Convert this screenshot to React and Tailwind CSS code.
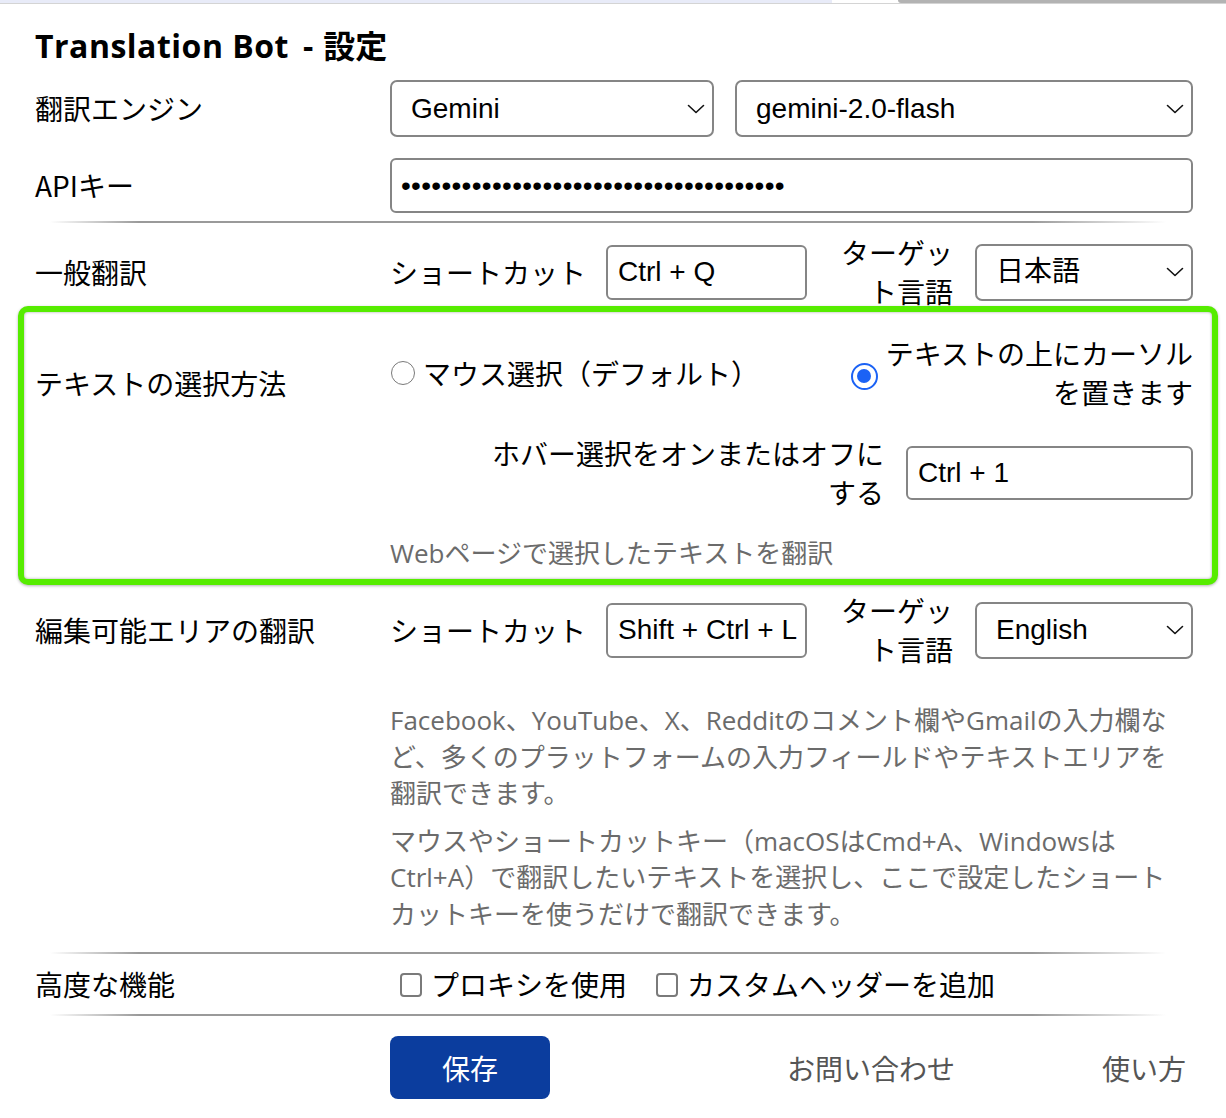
import { ChevronDown } from 'lucide-react'

const jp = "font-['Noto_Sans_CJK_JP',sans-serif]"
const arial = "font-['Liberation_Sans','Noto_Sans_CJK_JP',sans-serif]"
const note = "font-['Open_Sans','Noto_Sans_CJK_JP',sans-serif] text-[26px] text-[#6b6b6b]"

function Select({ value, className = '' }) {
  return (
    <div
      className={`flex items-center justify-between border-2 border-[#858585] rounded-[7px] pl-[19px] pr-[7px] bg-white ${className}`}
    >
      <span className={`${arial} text-[28px] leading-none text-black`}>{value}</span>
      <svg width="18" height="10" viewBox="0 0 18 10" fill="none">
        <path d="M1.5 1.5 L9 8.5 L16.5 1.5" stroke="#111" strokeWidth="1.6" strokeLinecap="round" strokeLinejoin="round" />
      </svg>
    </div>
  )
}

function TextBox({ value, className = '' }) {
  return (
    <div
      className={`flex items-center border-2 border-[#858585] rounded-[6px] pl-[10px] bg-white ${className}`}
    >
      <span className={`${arial} text-[28px] leading-none text-black whitespace-nowrap`}>{value}</span>
    </div>
  )
}

function Divider() {
  return (
    <div className="ml-[32px] w-[1116px] h-[2px] bg-[linear-gradient(to_right,rgba(150,150,150,0),#9a9a9a_8%,#9a9a9a_88%,rgba(150,150,150,0))]" />
  )
}

function ShortcutRow({ shortcut, lang }) {
  return (
    <div className={`flex items-center h-[78px] ${jp} text-[28px] leading-[39px] text-black`}>
      <span className="w-[196px] whitespace-nowrap">ショートカット</span>
      <TextBox value={shortcut} className="ml-[20px] w-[201px] h-[55px]" />
      <span className="ml-[26px] w-[120px] text-right">ターゲット言語</span>
      <Select value={lang} className="ml-[22px] flex-1 h-[57px]" />
    </div>
  )
}

export default function App() {
  const dots = '•'.repeat(38)

  return (
    <div className={`w-[1226px] min-h-[1118px] bg-white ${jp} text-black`}>
      {/* browser chrome sliver */}
      <div className="flex h-[4px] border-b border-[#d4d4d4]">
        <div className="w-[832px] bg-[#e8ebf8]" />
        <div className="ml-[66px] flex-1 bg-[#b3b3b3] rounded-bl-[6px]" />
      </div>

      <div className="pl-[18px] pr-[10px]">
        <h1 className="mt-[19px] pl-[17px] font-['Open_Sans','Noto_Sans_CJK_JP',sans-serif] font-bold text-[32px] leading-[45px]">
          <span className="tracking-[0.5px]">Translation Bot</span>
          <span className="ml-[14px] mr-[10px]">-</span>
          <span>設定</span>
        </h1>

        {/* engine */}
        <div className="mt-[12px] pl-[17px] pr-[23px] grid grid-cols-[355px_1fr] items-center">
          <span className="text-[28px] leading-[39px]">翻訳エンジン</span>
          <div className="flex gap-[21px]">
            <Select value="Gemini" className="w-[324px] h-[57px]" />
            <Select value="gemini-2.0-flash" className="flex-1 h-[57px]" />
          </div>
        </div>

        {/* api key */}
        <div className="mt-[21px] pl-[17px] pr-[23px] grid grid-cols-[355px_1fr] items-center">
          <span className="text-[28px] leading-[39px]">APIキー</span>
          <div className="flex items-center h-[55px] border-2 border-[#858585] rounded-[6px] pl-[9px] overflow-hidden">
            <span className={`${arial} text-[28px] leading-none tracking-[0.3px]`}>{dots}</span>
          </div>
        </div>

        <div className="mt-[8px]">
          <Divider />
        </div>

        {/* general translation */}
        <div className="mt-[10px] pl-[17px] pr-[23px] grid grid-cols-[355px_1fr] items-center">
          <span className="text-[28px] leading-[39px]">一般翻訳</span>
          <ShortcutRow shortcut="Ctrl + Q" lang="日本語" />
        </div>

        {/* selection method (highlighted) */}
        <div className="relative mt-[-5px] mr-[-2px] border-[6px] border-[#56ec00] rounded-[10px] bg-white shadow-[inset_0_0_3px_rgba(0,0,0,0.35),0_1px_3px_rgba(0,0,0,0.3)] pl-[11px] pr-[19px] pt-[22px] pb-[8px] grid grid-cols-[355px_1fr]">
          <span className="mt-[30px] text-[28px] leading-[39px] self-start">テキストの選択方法</span>
          <div className="text-[28px] leading-[39px]">
            <div className="flex items-center justify-between h-[78px]">
              <label className="flex items-center gap-[8px]">
                <span className="ml-[1px] w-[24px] h-[24px] rounded-full border-[1.5px] border-[#7a7a7a]" />
                <span>マウス選択（デフォルト）</span>
              </label>
              <label className="flex items-center gap-[8px]">
                <span className="mt-[6px] w-[27px] h-[27px] rounded-full border-[2.5px] border-[#1b62f5] flex items-center justify-center">
                  <span className="w-[14px] h-[14px] rounded-full bg-[#1b62f5]" />
                </span>
                <span className="text-right whitespace-nowrap">
                  テキストの上にカーソル
                  <br />
                  を置きます
                </span>
              </label>
            </div>
            <div className="mt-[22px] flex items-center justify-end">
              <span className="w-[400px] text-right">ホバー選択をオンまたはオフにする</span>
              <TextBox value="Ctrl + 1" className="ml-[22px] w-[287px] h-[54px]" />
            </div>
            <p className={`mt-[23px] ${note} leading-[36px]`}>Webページで選択したテキストを翻訳</p>
          </div>
        </div>

        {/* editable area */}
        <div className="mt-[6px] pl-[17px] pr-[23px] grid grid-cols-[355px_1fr]">
          <span className="h-[78px] flex items-center text-[28px] leading-[39px]">編集可能エリアの翻訳</span>
          <div>
            <ShortcutRow shortcut="Shift + Ctrl + L" lang="English" />
            <p className={`mt-[33px] ${note} leading-[36.5px]`}>
              Facebook、YouTube、X、Redditのコメント欄やGmailの入力欄な
              <br />
              ど、多くのプラットフォームの入力フィールドやテキストエリアを
              <br />
              翻訳できます。
            </p>
            <p className={`mt-[11px] ${note} leading-[36.5px]`}>
              マウスやショートカットキー（macOSはCmd+A、Windowsは
              <br />
              Ctrl+A）で翻訳したいテキストを選択し、ここで設定したショート
              <br />
              カットキーを使うだけで翻訳できます。
            </p>
          </div>
        </div>

        <div className="mt-[20px]">
          <Divider />
        </div>

        {/* advanced */}
        <div className="mt-[11px] pl-[17px] pr-[23px] grid grid-cols-[355px_1fr] items-center">
          <span className="text-[28px] leading-[39px]">高度な機能</span>
          <div className="flex items-center text-[28px] leading-[39px]">
            <span className="ml-[10px] w-[22px] h-[24px] rounded-[4px] border-2 border-[#7a7a7a]" />
            <span className="ml-[9px]">プロキシを使用</span>
            <span className="ml-[29px] w-[22px] h-[24px] rounded-[4px] border-2 border-[#7a7a7a]" />
            <span className="ml-[9px]">カスタムヘッダーを追加</span>
          </div>
        </div>

        <div className="mt-[10px]">
          <Divider />
        </div>

        {/* footer */}
        <div className="mt-[20px] pl-[17px] pr-[23px] grid grid-cols-[355px_1fr] items-center">
          <span />
          <div className="flex items-center text-[28px]">
            <button className="w-[160px] h-[63px] rounded-[8px] bg-[#0b3d9e] text-white text-[28px] leading-none">
              保存
            </button>
            <a className="ml-[237px] text-[#555]">お問い合わせ</a>
            <a className="ml-[147px] text-[#555]">使い方</a>
          </div>
        </div>
      </div>
    </div>
  )
}
